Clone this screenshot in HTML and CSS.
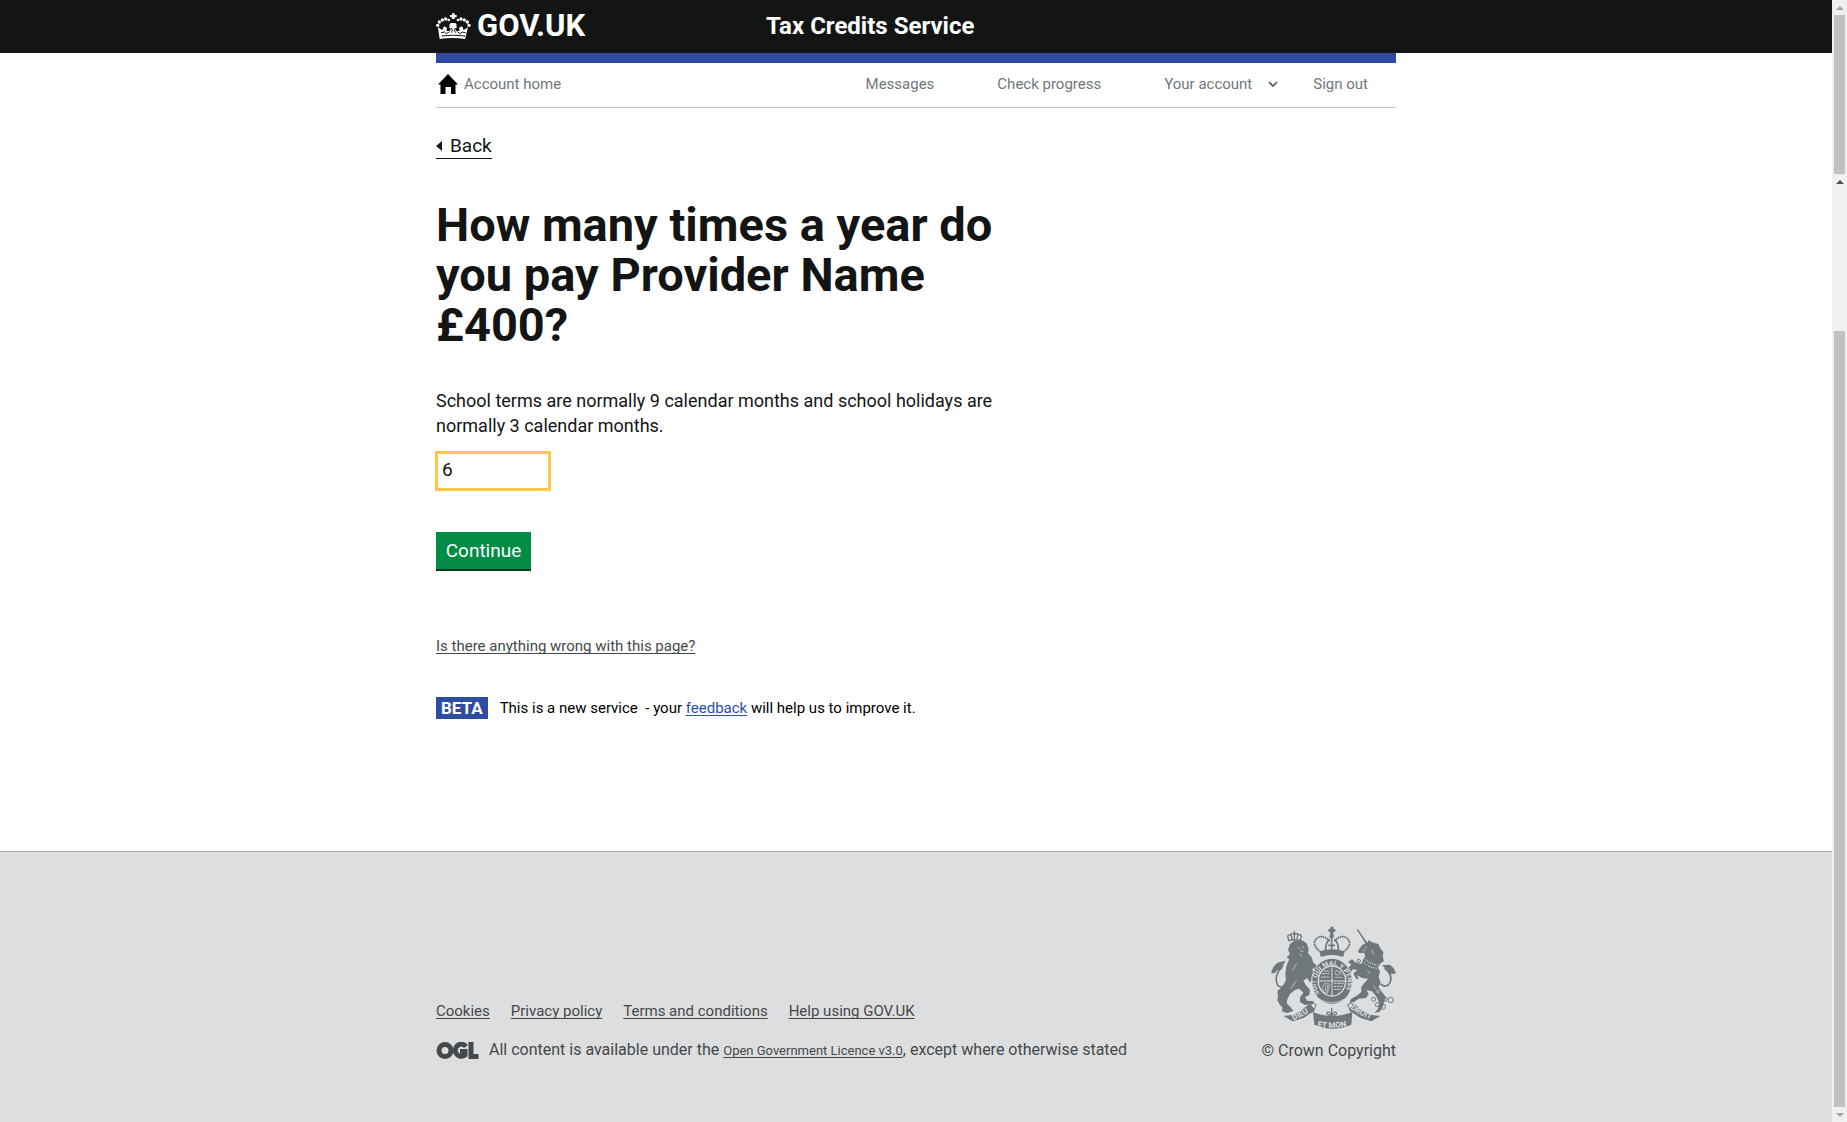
FILE: index.html
```
<!DOCTYPE html>
<html lang="en">
<head>
<meta charset="utf-8">
<meta name="viewport" content="width=device-width, initial-scale=1">
<title>How many times a year do you pay Provider Name £400? - Tax Credits Service</title>
<link rel="stylesheet" href="styles.css">
</head>
<body>
<div class="page">
  <header class="site-header">
    <div class="container site-header-inner">
      <a class="logo" href="#">
        <svg class="logo-crown" viewBox="18 23 105 78" aria-hidden="true">
          <g fill="#fff">
            <path d="M66 24h8v5h6v7h-6v5h-8v-5h-6v-7h6z"/>
            <path d="M24 66l13 8 5-11 9 4-2 9 11 2 2-8 -5-4 3-6h-3l5-7h14l5 7h-3l3 6-5 4 2 8 11-2-2-9 9-4 5 11 13-8-9 35q-37-6-76 0z"/>
            <circle cx="37" cy="44" r="5"/><circle cx="47" cy="41" r="5"/><circle cx="56" cy="44" r="4"/>
            <circle cx="28" cy="50" r="5"/><circle cx="23" cy="60" r="5"/>
            <circle cx="103" cy="44" r="5"/><circle cx="93" cy="41" r="5"/><circle cx="84" cy="44" r="4"/>
            <circle cx="112" cy="50" r="5"/><circle cx="117" cy="60" r="5"/>
          </g>
          <path d="M35 92q35-5 70 0M33 82l11-2 5 5 8-5M107 82l-11-2-5 5-8-5M64 68l3 8-4 6M76 68l-3 8 4 6" fill="none" stroke="#131514" stroke-width="3"/>
        </svg>
        <span>GOV.UK</span>
      </a>
      <a class="service-name" href="#">Tax Credits Service</a>
    </div>
  </header>

  <div class="container">
    <nav class="account-nav" aria-label="Account">
      <a class="home-link" href="#">
        <svg class="home-icon" viewBox="0 0 20 20" aria-hidden="true"><path d="M10 0l10 10.500h-2.500V20H13v-7H7.500v7H2.500v-9.500H0z"/></svg>
        Account home
      </a>
      <ul class="account-links">
        <li><a href="#">Messages</a></li>
        <li><a href="#">Check progress</a></li>
        <li class="has-menu"><a href="#">Your account
          <svg class="chevron" viewBox="0 0 10 7" aria-hidden="true"><path d="M1 1l4 4 4-4" fill="none" stroke="#555" stroke-width="1.600"/></svg></a></li>
        <li><a href="#">Sign out</a></li>
      </ul>
    </nav>

    <main class="content">
      <a class="back-link" href="#">Back</a>
      <form class="question">
        <h1><label for="times">How many times a year do you pay Provider Name £400?</label></h1>
        <p id="times-hint">School terms are normally 9 calendar months and school holidays are normally 3 calendar months.</p>
        <input class="number-input" id="times" type="text" inputmode="numeric" value="6" aria-describedby="times-hint">
        <button class="button" type="button">Continue</button>
      </form>
      <a class="report-link" href="#">Is there anything wrong with this page?</a>
      <div class="phase">
        <strong class="phase-tag">BETA</strong>
        <span>This is a new service &nbsp;- your <a href="#">feedback</a> will help us to improve it.</span>
      </div>
    </main>
  </div>

  <footer class="site-footer">
    <div class="container footer-inner">
      <div class="footer-meta">
        <ul class="footer-links">
          <li><a href="#">Cookies</a></li>
          <li><a href="#">Privacy policy</a></li>
          <li><a href="#">Terms and conditions</a></li>
          <li><a href="#">Help using GOV.UK</a></li>
        </ul>
        <div class="licence">
          <svg class="ogl" viewBox="0 0 42 17" role="img" aria-label="OGL">
            <g fill="none" stroke="#45494b" stroke-width="5">
              <ellipse cx="8.500" cy="8.500" rx="6" ry="6"/>
              <path d="M29.500 4.500A6 6 0 1 0 28.500 13V9.500H23.500"/>
              <path d="M34.500 0V14.500H42"/>
            </g>
          </svg>
          <p>All content is available under the <a href="#">Open Government Licence v3.0</a>, except where otherwise stated</p>
        </div>
      </div>
      <a class="copyright" href="#">
        <svg class="arms" viewBox="60 48 378 312" aria-hidden="true">
          <defs>
            <path id="garter" d="M208 252A47 54 0 1 1 284 252"/>
            <path id="scroll-left" d="M130 331Q162 319 192 296"/>
            <path id="scroll-mid" d="M202 350Q245 358 294 348"/>
            <path id="scroll-right" d="M301 296Q328 317 372 331"/>
          </defs>
          <g fill="#6f777b">
            <path d="M241 50h9v7h6v8h-6v8h-9v-8h-6v-8h6z"/>
            <circle cx="245" cy="78" r="7"/>
            <path d="M209 124q36-12 74 0l-3 17q-34-12-68 0z"/>
            <path d="M120 102L133 92 155 90 170 100 176 118 174 130 184 140 190 158 200 166 196 176 186 176 192 190 188 200 186 214 178 216 172 204 160 212 168 226 180 240 178 255 165 262 172 272 192 274 190 282 165 285 150 276 150 262 160 248 148 236 135 240 120 252 112 268 110 280 122 292 130 302 112 309 95 304 98 294 88 282 82 270 84 256 82 244 100 226 108 210 106 190 110 165 118 148 110 142 120 132 114 120z"/>
            <path d="M63 190L70 171 82 158 106 152 100 166 94 178 82 181 74 190z"/>
            <path d="M322 58L352 98 357 90 364 96 385 102 392 116 400 126 398 140 402 152 392 160 384 172 390 186 386 202 392 216 386 232 396 246 408 262 402 276 398 292 388 306 374 308 384 296 388 278 378 258 366 244 350 240 356 252 348 264 326 266 312 276 298 278 302 268 322 256 334 246 334 230 346 216 354 206 336 204 322 196 326 208 318 206 310 190 322 180 308 178 302 188 304 200 296 194 292 176 304 164 294 156 306 148 318 158 334 162 338 150 346 138 342 128 328 130 324 122 336 106 346 100z"/>
            <path d="M438 190L431 175 420 164 396 165 408 178 414 188 426 192z"/>
            <path d="M100 318L132 314 158 298 178 282 194 296 188 306 160 324 128 334z"/>
            <path d="M391 318L360 314 332 298 314 282 298 296 304 306 332 324 364 334z"/>
            <path d="M189 307q57 22 118 0l-3 37q-56 24-111 0z"/>
          </g>
          <g fill="none" stroke="#6f777b" stroke-width="5">
            <path d="M98 168q-28 30-16 56 14 18 28-8M404 174q26 20 16 44-10 18-28 4"/>
            <path d="M213 127q-30-22-14-41 18-15 40 7M279 127q30-22 14-41-18-15-40 7" stroke-width="6" stroke-dasharray="5 2"/>
            <path d="M227 122q-2-22 12-34M265 122q2-22-12-34M245 84v36M235 106h20"/>
            <g stroke-width="3">
              <path d="M189 308l10-24-12-5q-10 8 5 22M303 308l-10-24 12-5q10 8-5 22"/>
              <path d="M116 92l-3-14q4-6 9-2 3-8 9-4l2-6 3 6q6-4 9 3 6-4 9 3l-3 13q-17-4-35 1zM133 70v18M124 76l2 12M143 75l-2 12" stroke-width="4"/>
              <circle cx="422" cy="270" r="8"/><circle cx="398" cy="290" r="8"/><circle cx="371" cy="268" r="6"/>
              <circle cx="405" cy="268" r="6"/><circle cx="382" cy="284" r="6"/><circle cx="326" cy="153" r="5"/><circle cx="303" cy="174" r="5"/>
            </g>
            <path d="M322 58l28 42" stroke-width="4"/>
            <path d="M245 294v36M233 315h24M245 313q-16-16-14 2M245 313q16-16 14 2" stroke-width="4"/>
          </g>
          <ellipse cx="246" cy="214" rx="61" ry="69" fill="#6f777b" stroke="#dddee0" stroke-width="3"/>
          <ellipse cx="246" cy="213" rx="43" ry="47" fill="#dddee0"/>
          <ellipse cx="246" cy="213" rx="39" ry="43" fill="#6f777b"/>
          <g fill="none" stroke="#dddee0" stroke-width="3">
            <path d="M246 172v84M207 213h78"/>
            <path d="M216 191h24M214 201h26M222 183h18M253 220h28M253 229h26M253 238h20" stroke-dasharray="6 2"/>
            <path d="M223 221l-7 12 6 14 10 3 7-28zM227 225v20M233 225v20" stroke-width="2"/>
            <path d="M258 181l13 5-5 9-10-2zM254 202h23M270 184l8 12" stroke-width="2"/>
            <path d="M199 262q46 32 94 0M205 273q41 26 82-1" stroke-width="2"/>
            <path d="M339 142q21 22 46 23M335 152q20 21 48 23" stroke-dasharray="5 3"/>
            <path d="M143 112l7 3M156 111l6 0M150 123l10 1M148 132l8 5M352 110l-9 6M338 122l8 0M366 120l6 14" stroke-width="2"/>
            <path d="M139 212l-17 24M140 160l-12 22M352 180l8 11M370 226l6 10" stroke-width="2"/>
            <circle cx="384" cy="244" r="4" stroke-width="2"/>
          </g>
          <g class="motto">
            <text><textPath href="#garter">SOIT QUI MAL Y PENSE</textPath></text>
            <text class="motto-scroll"><textPath href="#scroll-left">DIEU</textPath></text>
            <text class="motto-scroll"><textPath href="#scroll-mid">ET MON</textPath></text>
            <text class="motto-scroll"><textPath href="#scroll-right">DROIT</textPath></text>
          </g>
        </svg>
        © Crown Copyright
      </a>
    </div>
  </footer>
</div>

<div class="scroll-rail" aria-hidden="true">
  <span class="rail-arrow rail-up muted"></span>
  <span class="rail-thumb rail-thumb-short"></span>
  <span class="rail-arrow rail-up"></span>
  <span class="rail-gap"></span>
  <span class="rail-thumb rail-thumb-long"></span>
  <span class="rail-arrow rail-down muted"></span>
</div>
</body>
</html>
```
FILE: styles.css
```
* {
  box-sizing: border-box;
}

body {
  display: grid;
  grid-template-columns: 1fr 15px;
  min-height: 100vh;
  margin: 0;
  background: #fff;
  color: #131514;
  font: 15px/20px Roboto, "Liberation Sans", sans-serif;
}

h1,
p,
ul {
  margin: 0;
  padding: 0;
}

ul {
  display: flex;
  list-style: none;
}

.page {
  display: flex;
  flex-direction: column;
}

.container {
  width: 100%;
  max-width: 960px;
  margin: 0 auto;
}

/* Header */

.site-header {
  background: #131514;
}

.site-header-inner {
  display: grid;
  grid-template-columns: 330px 1fr;
  align-items: center;
  height: 53px;
  padding-bottom: 2px;
}

.logo,
.service-name {
  color: #fff;
  font-weight: 700;
  text-decoration: none;
}

.logo {
  display: flex;
  align-items: center;
  gap: 6px;
  font-size: 31px;
  line-height: 30px;
}

.logo-crown {
  width: 35px;
  height: 26px;
}

.service-name {
  font-size: 24px;
  line-height: 30px;
}

/* Account navigation */

.account-nav {
  display: flex;
  justify-content: space-between;
  align-items: center;
  height: 55px;
  padding: 0 28px 2px 0;
  border-top: 10px solid #2e4da1;
  border-bottom: 1px solid #bfc1c3;
}

.account-nav a {
  display: flex;
  align-items: center;
  color: #6f777b;
  text-decoration: none;
}

.account-nav .home-link {
  gap: 6px;
  padding-left: 2px;
}

.home-icon {
  width: 20px;
  height: 20px;
}

.account-links {
  gap: 63px;
}

.has-menu {
  margin-right: -28px;
}

.chevron {
  width: 10px;
  height: 7px;
  margin-left: 16px;
}

/* Question */

.content {
  display: flex;
  flex-direction: column;
  align-items: flex-start;
  padding: 25px 0 132px;
}

.back-link {
  display: flex;
  align-items: center;
  gap: 8px;
  border-bottom: 1px solid #131514;
  color: #131514;
  font-size: 19px;
  line-height: 25px;
  text-decoration: none;
}

.back-link::before {
  content: "";
  border: 5px solid transparent;
  border-right: 6px solid #131514;
  border-left: 0;
}

.question {
  display: flex;
  flex-direction: column;
  align-items: flex-start;
  width: 100%;
  max-width: 580px;
  margin-top: 41px;
  font-size: 19px;
  line-height: 25px;
}

.question h1 {
  font-size: 47px;
  line-height: 50px;
}

.question p {
  margin-top: 38px;
  font-size: 18px;
}

.number-input {
  width: 114px;
  height: 38px;
  margin-top: 14px;
  padding: 0 6px 4px;
  border: 0;
  outline: 3px solid #ffc64a;
  outline-offset: -2px;
  color: #131514;
  font: inherit;
}

.button {
  width: 95px;
  height: 37px;
  margin-top: 42px;
  padding: 0;
  border: 0;
  background: #008c45;
  box-shadow: 0 2px 0 #003618;
  color: #fff;
  font: inherit;
}

.report-link {
  margin-top: 67px;
  color: #45494b;
}

.report-link,
.phase a,
.site-footer .footer-meta a {
  text-decoration-skip-ink: none;
  text-underline-offset: 2px;
}

.phase {
  display: flex;
  align-items: center;
  gap: 12px;
  margin-top: 41px;
  color: #000;
}

.phase a {
  color: #2b4fa5;
}

.phase-tag {
  padding: 0 5px;
  background: #2e4da1;
  color: #fff;
  font-size: 17px;
  line-height: 22px;
}

/* Footer */

.site-footer {
  flex: 1;
  border-top: 1px solid #a1acb2;
  background: #dddee0;
  color: #45494b;
  font-size: 16px;
}

.site-footer a {
  color: inherit;
}

.footer-inner {
  display: flex;
  justify-content: space-between;
  align-items: flex-end;
  padding: 74px 0 60px;
}

.footer-links {
  gap: 21px;
  font-size: 15px;
}

.licence {
  display: flex;
  align-items: center;
  gap: 10px;
  margin-top: 19px;
}

.licence a {
  font-size: 13px;
}

.ogl {
  width: 43px;
  height: 17px;
}

.copyright {
  display: flex;
  flex-direction: column;
  align-items: flex-end;
  gap: 11px;
  text-decoration: none;
}

.arms {
  width: 126px;
  height: 104px;
}

.motto {
  fill: #dddee0;
  font-size: 20px;
  font-weight: 700;
}

.motto-scroll {
  font-size: 24px;
}

/* Scroll rail */

.scroll-rail {
  display: flex;
  flex-direction: column;
  background: #f0f0f0;
}

.rail-arrow {
  display: grid;
  place-items: center;
  height: 15px;
  color: #505050;
}

.rail-arrow.muted {
  color: #a3a3a3;
}

.rail-arrow::before {
  content: "";
  border: 4px solid transparent;
}

.rail-up::before {
  border-top: 0;
  border-bottom-color: currentColor;
}

.rail-down::before {
  border-bottom: 0;
  border-top-color: currentColor;
}

.rail-thumb {
  margin: 0 2px;
  background: #c1c1c1;
}

.rail-thumb-short {
  height: 159px;
}

.rail-gap {
  height: 142px;
}

.rail-thumb-long {
  flex: 1;
}
```
